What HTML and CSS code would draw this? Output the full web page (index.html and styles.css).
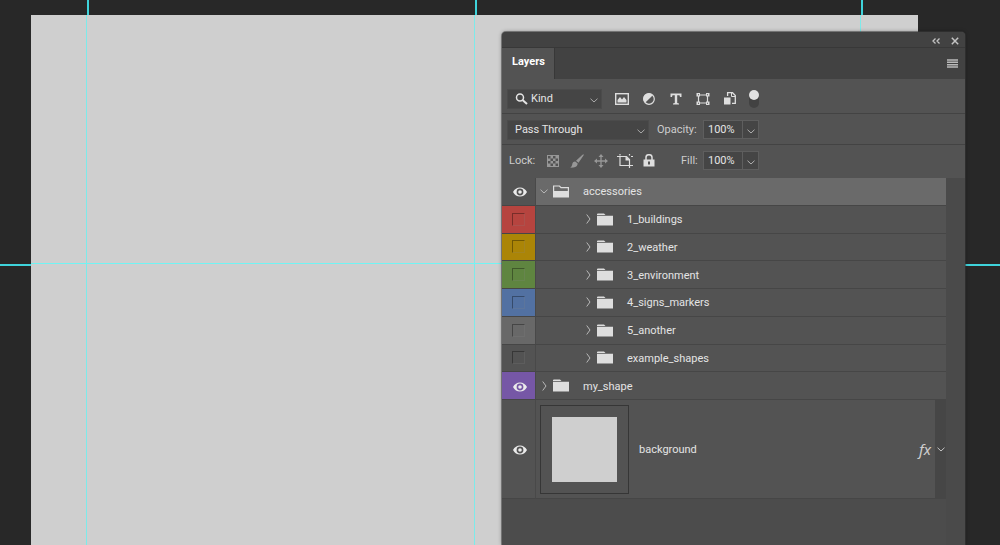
FILE: index.html
```html
<!DOCTYPE html>
<html lang="en">
<head>
<meta charset="utf-8">
<meta name="viewport" content="width=device-width, initial-scale=1">
<title>Layers</title>
<link rel="stylesheet" href="styles.css">
</head>
<body>
<svg class="defs" aria-hidden="true">
  <symbol id="eye" viewBox="0 0 14 10"><path fill="currentColor" fill-rule="evenodd" d="M0 5C1.6 2 4 .5 7 .5S12.400 2 14 5C12.400 8 10 9.500 7 9.500S1.600 8 0 5ZM7 1.600a3.400 3.400 0 1 0 0 6.800a3.400 3.400 0 1 0 0-6.800ZM7 3.200a1.800 1.800 0 1 1 0 3.600a1.800 1.800 0 1 1 0-3.600Z"/></symbol>
  <symbol id="folder" viewBox="0 0 16 13"><path fill="currentColor" d="M0 1.200Q0 .5 1 .5H7L8.500 2H0ZM0 2.800H16V12.500H0Z"/></symbol>
  <symbol id="folder-open" viewBox="0 0 16 13"><path fill="none" stroke="currentColor" stroke-width="1.200" d="M.6 12V1H6.500L8 2.600H15.400V12"/><path fill="currentColor" d="M0 6H16V12.500H0Z"/></symbol>
  <symbol id="down" viewBox="0 0 8 5"><path fill="none" stroke="currentColor" d="M.5.7 4 4 7.500.7"/></symbol>
  <symbol id="right" viewBox="0 0 5 10"><path fill="none" stroke="currentColor" d="M.7.5 4 5 .7 9.500"/></symbol>
</svg>
<main class="workspace">
  <div class="document"></div>
  <i class="guide vertical g1"></i>
  <i class="guide vertical g2"></i>
  <i class="guide vertical g3"></i>
  <i class="guide horizontal"></i>

  <section class="panel" aria-label="Layers panel">
    <div class="titlebar">
      <button class="icon-button" aria-label="Collapse"><svg width="9" height="6" viewBox="0 0 9 6"><path d="M3.500.5 1 3 3.500 5.500M7.500.5 5 3 7.500 5.500" fill="none" stroke="currentColor" stroke-width="1.300"/></svg></button>
      <button class="icon-button" aria-label="Close"><svg width="8" height="8" viewBox="0 0 8 8"><path d="M.8.8 7.200 7.200M7.200.8.8 7.200" stroke="currentColor" stroke-width="1.500"/></svg></button>
    </div>
    <div class="tabs">
      <button class="tab">Layers</button>
      <button class="icon-button" aria-label="Panel menu"><svg width="11" height="9" viewBox="0 0 11 9"><path d="M0 1H11M0 3.300H11M0 5.700H11M0 8H11" stroke="currentColor" stroke-width="1.400"/></svg></button>
    </div>

    <div class="bar filter-bar">
      <div class="dropdown kind">
        <svg class="search" width="13" height="12" viewBox="0 0 13 12"><circle cx="5" cy="4.500" r="3.500" fill="none" stroke="currentColor" stroke-width="1.500"/><path d="M7.500 7 12 11" stroke="currentColor" stroke-width="2"/></svg>
        <select aria-label="Filter type"><option>Kind</option></select>
        <svg class="arrow" width="8" height="5"><use href="#down"/></svg>
      </div>
      <div class="filters">
        <button class="icon-button" aria-label="Pixel layers"><svg width="14" height="12" viewBox="0 0 14 12"><rect x=".7" y=".7" width="12.600" height="10.600" fill="none" stroke="currentColor" stroke-width="1.400"/><path d="M2.500 9.500V7L5 4 7 6.500 9 4 11.500 7V9.500Z" fill="currentColor"/></svg></button>
        <button class="icon-button" aria-label="Adjustment layers"><svg width="12" height="12" viewBox="0 0 12 12"><circle cx="6" cy="6" r="5.300" fill="none" stroke="currentColor" stroke-width="1.200"/><path d="M9.800 2.200A5.400 5.400 0 1 0 2.200 9.800Z" fill="currentColor"/></svg></button>
        <button class="icon-button" aria-label="Type layers"><svg width="12" height="12" viewBox="0 0 12 12"><path d="M.5.500H11.500V4H10L9.500 2.300H7.200V10L9 10.500V11.500H3V10.500L4.800 10V2.300H2.500L2 4H.5Z" fill="currentColor"/></svg></button>
        <button class="icon-button" aria-label="Shape layers"><svg width="14" height="12" viewBox="0 0 14 12"><path d="M2.500 2H11.500V10H2.500Z" fill="none" stroke="currentColor" stroke-width="1.200"/><g fill="currentColor"><path d="M.5 0h3.500v3.500H.5ZM10 0h3.500v3.500H10ZM.5 8.500H4V12H.5ZM10 8.500h3.500V12H10Z"/></g><path d="M2 1.300h1v1H2ZM11 1.300h1v1h-1ZM2 9.700h1v1H2ZM11 9.700h1v1h-1Z" fill="#535353"/></svg></button>
        <button class="icon-button" aria-label="Smart objects"><svg width="12" height="13" viewBox="0 0 12 13"><path d="M3.600 4V.7H8.500L11.300 3.500V11.300H8" fill="none" stroke="currentColor" stroke-width="1.300"/><path d="M7.500.7V4.500H11.300" fill="none" stroke="currentColor"/><path d="M0 5.500H6.500V12.500H0Z" fill="currentColor"/></svg></button>
      </div>
      <input class="toggle" type="checkbox" aria-label="Layer filtering">
    </div>

    <div class="bar blend-bar">
      <div class="dropdown mode">
        <select aria-label="Blend mode"><option>Pass Through</option></select>
        <svg class="arrow" width="8" height="5"><use href="#down"/></svg>
      </div>
      <label for="opacity">Opacity:</label>
      <div class="stepper">
        <input id="opacity" type="text" value="100%">
        <button aria-label="Opacity slider"><svg width="8" height="5"><use href="#down"/></svg></button>
      </div>
    </div>

    <div class="bar lock-bar">
      <span class="lock-label">Lock:</span>
      <div class="locks">
        <button class="icon-button dim" aria-label="Lock transparent pixels"><svg width="12" height="12" viewBox="0 0 12 12"><rect x=".5" y=".5" width="11" height="11" fill="none" stroke="currentColor"/><path d="M3.500 1h2.500v2.500H3.500ZM8.500 1H11v2.500H8.500ZM1 3.500h2.500V6H1ZM6 3.500h2.500V6H6ZM3.500 6H6v2.500H3.500ZM8.500 6H11v2.500H8.500ZM1 8.500h2.500V11H1ZM6 8.500h2.500V11H6Z" fill="currentColor"/></svg></button>
        <button class="icon-button dim" aria-label="Lock image pixels"><svg width="14" height="14" viewBox="0 0 14 14"><path d="M13.600.3Q14 .5 13.500 1.500L8.500 8.800 6 6.800 12.500.8ZM5.200 7.500 7.700 9.600Q7.500 13 3.500 13.500L.3 13.700Q2 12.500 2.200 10.500 2.500 7.700 5.200 7.500Z" fill="currentColor"/></svg></button>
        <button class="icon-button dim" aria-label="Lock position"><svg width="14" height="14" viewBox="0 0 14 14"><path d="M7 2V12M2 7H12" stroke="currentColor" stroke-width="1.300"/><path d="M7 0 9.500 3H4.500ZM7 14 9.500 11H4.500ZM0 7 3 4.500V9.500ZM14 7 11 4.500V9.500Z" fill="currentColor"/></svg></button>
        <button class="icon-button" aria-label="Lock artboard nesting"><svg width="16" height="14" viewBox="0 0 16 14"><path d="M0 2.500H9.500L12.500 5.500V14M3 0V1.500M3 2.500V11.500H16M14 2.500H16M12.500 0V1.500" fill="none" stroke="currentColor" stroke-width="1.200"/><path d="M8.500 2V6.500H13Z" fill="currentColor"/></svg></button>
        <button class="icon-button" aria-label="Lock all"><svg width="12" height="13" viewBox="0 0 12 13"><path d="M3 6V3.500A3 2.800 0 0 1 9 3.500V6" fill="none" stroke="currentColor" stroke-width="1.500"/><path fill="currentColor" fill-rule="evenodd" d="M.5 5.500H11.500V12.500H.5ZM5 7.500V10.500H7V7.500Z"/></svg></button>
      </div>
      <label for="fill">Fill:</label>
      <div class="stepper">
        <input id="fill" type="text" value="100%">
        <button aria-label="Fill slider"><svg width="8" height="5"><use href="#down"/></svg></button>
      </div>
    </div>

    <div class="layers">
      <div class="groups">
        <div class="layer selected">
          <label class="visibility shown"><input type="checkbox" checked aria-label="Show accessories"><svg width="14" height="10"><use href="#eye"/></svg></label>
          <div class="entry"><button class="expand" aria-label="Collapse accessories"><svg width="8" height="5"><use href="#down"/></svg></button><svg class="folder" width="16" height="13"><use href="#folder-open"/></svg><span>accessories</span></div>
        </div>
        <div class="layer child">
          <label class="visibility red"><input type="checkbox" aria-label="Show 1_buildings"></label>
          <div class="entry"><button class="expand" aria-label="Expand 1_buildings"><svg width="5" height="10"><use href="#right"/></svg></button><svg class="folder" width="16" height="13"><use href="#folder"/></svg><span>1_buildings</span></div>
        </div>
        <div class="layer child">
          <label class="visibility yellow"><input type="checkbox" aria-label="Show 2_weather"></label>
          <div class="entry"><button class="expand" aria-label="Expand 2_weather"><svg width="5" height="10"><use href="#right"/></svg></button><svg class="folder" width="16" height="13"><use href="#folder"/></svg><span>2_weather</span></div>
        </div>
        <div class="layer child">
          <label class="visibility green"><input type="checkbox" aria-label="Show 3_environment"></label>
          <div class="entry"><button class="expand" aria-label="Expand 3_environment"><svg width="5" height="10"><use href="#right"/></svg></button><svg class="folder" width="16" height="13"><use href="#folder"/></svg><span>3_environment</span></div>
        </div>
        <div class="layer child">
          <label class="visibility blue"><input type="checkbox" aria-label="Show 4_signs_markers"></label>
          <div class="entry"><button class="expand" aria-label="Expand 4_signs_markers"><svg width="5" height="10"><use href="#right"/></svg></button><svg class="folder" width="16" height="13"><use href="#folder"/></svg><span>4_signs_markers</span></div>
        </div>
        <div class="layer child">
          <label class="visibility gray"><input type="checkbox" aria-label="Show 5_another"></label>
          <div class="entry"><button class="expand" aria-label="Expand 5_another"><svg width="5" height="10"><use href="#right"/></svg></button><svg class="folder" width="16" height="13"><use href="#folder"/></svg><span>5_another</span></div>
        </div>
        <div class="layer child">
          <label class="visibility"><input type="checkbox" aria-label="Show example_shapes"></label>
          <div class="entry"><button class="expand" aria-label="Expand example_shapes"><svg width="5" height="10"><use href="#right"/></svg></button><svg class="folder" width="16" height="13"><use href="#folder"/></svg><span>example_shapes</span></div>
        </div>
        <div class="layer">
          <label class="visibility shown violet"><input type="checkbox" checked aria-label="Show my_shape"><svg width="14" height="10"><use href="#eye"/></svg></label>
          <div class="entry"><button class="expand" aria-label="Expand my_shape"><svg width="5" height="10"><use href="#right"/></svg></button><svg class="folder" width="16" height="13"><use href="#folder"/></svg><span>my_shape</span></div>
        </div>
      </div>
      <div class="layer backdrop">
        <label class="visibility shown"><input type="checkbox" checked aria-label="Show background"><svg width="14" height="10"><use href="#eye"/></svg></label>
        <div class="entry">
          <div class="thumb"><div class="swatch"></div></div>
          <span>background</span>
          <span class="fx">fx</span>
          <button class="effects" aria-label="Show effects"><svg width="8" height="5"><use href="#down"/></svg></button>
        </div>
      </div>
    </div>
  </section>
</main>
</body>
</html>
```

FILE: styles.css
```css
* { box-sizing: border-box; }
body {
  margin: 0;
  background: #282828;
  color: #e4e4e4;
  font: 11px/16px Roboto, "Noto Sans", sans-serif;
}
button, input, select { font: inherit; color: inherit; margin: 0; padding: 0; border: 0; border-radius: 0; background: none; }
svg { display: block; flex: none; }
.defs { position: absolute; width: 0; height: 0; }

.workspace {
  position: relative;
  display: flex;
  height: 100vh;
  overflow: hidden;
  padding: 15px 82px 0 31px;
}
.document { flex: 1; background: #cfcfcf; }

/* Ruler guides: two pixels wide over the pasteboard, one over the document */
.guide { position: absolute; }
.vertical {
  top: 0;
  bottom: 0;
  width: 3px;
  background:
    linear-gradient(#3fd3db, #3fd3db) 1px 0 / 2px 15px no-repeat,
    linear-gradient(#7deaea, #7deaea) 0 15px / 1px 100% no-repeat;
}
.g1 { left: 86px; }
.g2 { left: 474px; }
.g3 { left: 860px; }
.horizontal {
  left: 0;
  right: 0;
  top: 263px;
  height: 3px;
  background:
    linear-gradient(#3fd3db, #3fd3db) 0 1px / 31px 2px no-repeat,
    linear-gradient(#3fd3db, #3fd3db) 100% 1px / 82px 2px no-repeat;
}
.horizontal::before {
  content: "";
  display: block;
  height: 1px;
  margin: 0 82px 0 31px;
  background: #70f4f4;
}

.panel {
  position: absolute;
  top: 32px;
  right: 35px;
  bottom: 0;
  width: 463px;
  display: flex;
  flex-direction: column;
  background: #535353;
  border-radius: 4px 4px 0 0;
  box-shadow: 0 0 0 1px #3c3c3c80, 0 0 4px #0006;
}
.icon-button { display: grid; place-items: center; height: 16px; color: #dedede; }
.icon-button.dim { color: #979797; }
.titlebar {
  display: flex;
  justify-content: flex-end;
  align-items: center;
  gap: 10px;
  height: 16px;
  padding: 2px 6px 0 0;
  border-bottom: 1px solid #383838;
  border-radius: 4px 4px 0 0;
  background: #424242;
}
.titlebar .icon-button { color: #c4c4c4; }
.tabs {
  display: flex;
  justify-content: space-between;
  align-items: center;
  height: 31px;
  padding-right: 7px;
  background: #424242;
}
.tabs .icon-button { color: #b9b9b9; }
.tab {
  align-self: stretch;
  padding: 0 9px 4px 10px;
  border-right: 1px solid #383838;
  background: #535353;
  color: #fff;
  font-weight: 700;
}

.bar { display: flex; align-items: center; padding-left: 5px; color: #cdcdcd; }
.filter-bar { height: 35px; padding-top: 5px; border-bottom: 1px solid #434343; }
.blend-bar { height: 31px; padding-top: 1px; border-bottom: 1px solid #434343; }
.lock-bar { height: 33px; padding: 0 0 2px 7px; }

.dropdown { position: relative; height: 20px; background: #454545; border: 1px solid #4b4b4b; color: #e4e4e4; }
.dropdown select { display: block; width: 100%; height: 100%; appearance: none; outline: 0; }
.kind { width: 95px; }
.kind select { padding-left: 23px; }
.mode { width: 142px; }
.mode select { padding-left: 7px; }
.search { position: absolute; left: 7px; top: 3px; pointer-events: none; }
.arrow { position: absolute; right: 3px; top: 8px; color: #a9a9a9; pointer-events: none; }
.filters { display: grid; grid-template-columns: repeat(5, 27px); margin-left: 6px; }
.toggle {
  appearance: none;
  position: relative;
  width: 10px;
  height: 18px;
  margin-left: 6px;
  border-radius: 5px;
  background: #424242;
}
.toggle::before { content: ""; position: absolute; left: 0; top: 0; width: 10px; height: 10px; border-radius: 50%; background: #e2e2e2; }

.bar label { width: 54px; padding-left: 8px; white-space: nowrap; }
.stepper { display: flex; height: 19px; border: 1px solid #5e5e5e; background: #454545; }
.stepper input { width: 38px; padding-left: 4px; color: #e4e4e4; }
.stepper button { display: grid; place-items: center; width: 16px; padding-top: 3px; border-left: 1px solid #5e5e5e; color: #b0b0b0; }
.lock-label { width: 32px; }
.locks { display: grid; grid-template-columns: repeat(5, 24px); margin-right: 12px; }
.bar label[for="fill"] { width: 30px; }

.layers { flex: 1; border-right: 19px solid #4a4a4a; background: #4c4c4c; }
.groups { display: grid; grid-template-rows: repeat(8, 1fr); height: 222px; }
.layer { display: grid; grid-template-columns: 34px 1fr; background: #535353; }
.visibility { display: grid; place-items: center; border-right: 1px solid #494949; border-bottom: 1px solid #464646; }
.visibility input {
  appearance: none;
  width: 13px;
  height: 13px;
  border: 1px solid;
  border-color: #0005 #8883 #8883 #0005;
}
.shown input, .shown svg { grid-area: 1 / 1; }
.visibility.shown input { opacity: 0; }
.shown svg { margin: 2px 0 0 2px; color: #ebebeb; }
.red { background: #b6443f; }
.yellow { background: #ab8507; }
.green { background: #5f8540; }
.blue { background: #5271a2; }
.gray { background: #686868; }
.violet { background: #7657a6; }
.entry { display: flex; align-items: center; min-width: 0; padding-left: 3px; border-bottom: 1px solid #464646; }
.entry span { padding-top: 2px; }
.child .entry { padding-left: 47px; }
.selected .entry { background: #6a6a6a; }
.expand { display: grid; place-items: center; width: 10px; height: 16px; color: #b8b8b8; }
.folder { margin: 0 14px 0 4px; color: #dedede; }
.backdrop { height: 99px; }
.backdrop .entry { padding-left: 4px; }
.thumb { padding: 11px; margin-right: 10px; border: 1px solid #363636; }
.swatch { width: 65px; height: 65px; background: #cfcfcf; }
.entry .fx { margin-left: auto; padding: 0 4px 0 0; font-family: "Noto Sans", sans-serif; font-size: 15px; font-style: italic; color: #cfcfcf; }
.effects { align-self: stretch; display: grid; place-items: center; width: 11px; background: #464646; color: #c4c4c4; }
```
